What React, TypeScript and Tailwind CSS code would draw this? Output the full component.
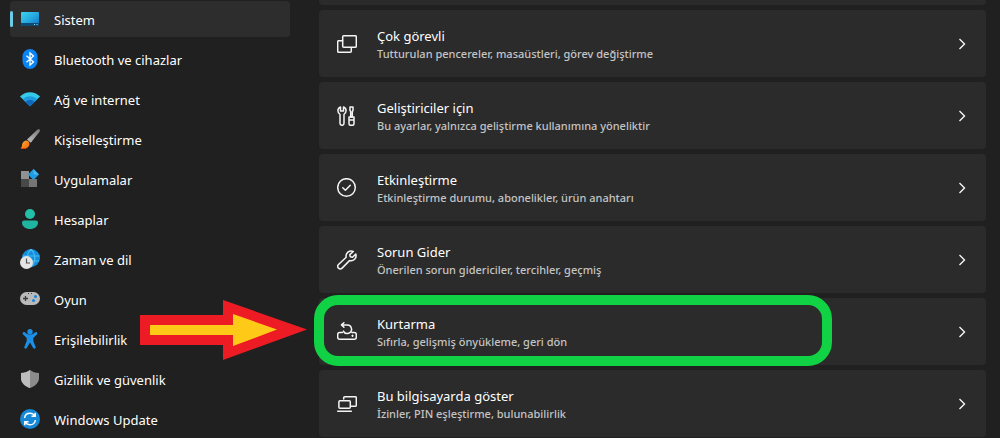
import type { ReactNode } from "react";
import { clsx } from "clsx";

type NavItem = { label: string; icon: ReactNode; active?: boolean };
type SettingItem = {
  title: string;
  description: string;
  icon: ReactNode;
  highlighted?: boolean;
};

/** Full-colour sidebar icon on a 20px grid. */
function ColorIcon({ children }: { children: ReactNode }) {
  return (
    <svg viewBox="0 0 20 20" className="size-5 shrink-0" aria-hidden="true">
      {children}
    </svg>
  );
}

/** Thin outline icon used on the cards. */
function LineIcon({ children }: { children: ReactNode }) {
  return (
    <svg
      viewBox="0 0 20 20"
      className="size-5 shrink-0"
      fill="none"
      stroke="#f5f5f5"
      strokeWidth="1.5"
      strokeLinecap="round"
      strokeLinejoin="round"
      aria-hidden="true"
    >
      {children}
    </svg>
  );
}

const navItems: NavItem[] = [
  {
    label: "Sistem",
    active: true,
    icon: (
      <ColorIcon>
        <defs>
          <linearGradient id="screen" x1="0" y1="0" x2="1" y2="1">
            <stop offset="0" stopColor="#3cd2ee" />
            <stop offset="0.5" stopColor="#27a9e0" />
            <stop offset="1" stopColor="#0f6fc4" />
          </linearGradient>
        </defs>
        <rect x="1" y="3" width="18" height="14" rx="1" fill="url(#screen)" />
        <path d="M1 14h18v2a1 1 0 0 1-1 1H2a1 1 0 0 1-1-1z" fill="#0d4a73" />
        <path d="M14 15h1v1h-1zM16.500 15h1v1h-1z" fill="#9fdcf2" />
      </ColorIcon>
    ),
  },
  {
    label: "Bluetooth ve cihazlar",
    icon: (
      <ColorIcon>
        <rect x="2.500" y="0" width="15" height="20" rx="7.500" fill="#0a84f5" />
        <path
          d="M6.500 6.700l7 6.400-3.500 3V3.900l3.500 3-7 6.400"
          fill="none"
          stroke="#fff"
          strokeWidth="1.300"
        />
      </ColorIcon>
    ),
  },
  {
    label: "Ağ ve internet",
    icon: (
      <ColorIcon>
        <path d="M0 7.500C5.500 1.800 14.500 1.800 20 7.500L10 17.300z" fill="#35c9e8" />
        <path d="M2.800 10.200c4-4 10.400-4 14.400 0L10 17.300z" fill="#1e9ade" />
        <path d="M5.500 12.900c2.500-2.400 6.500-2.400 9 0L10 17.300z" fill="#1068bd" />
      </ColorIcon>
    ),
  },
  {
    label: "Kişiselleştirme",
    icon: (
      <ColorIcon>
        <defs>
          <linearGradient id="handle" x1="1" y1="0" x2="0" y2="1">
            <stop offset="0" stopColor="#777" />
            <stop offset="1" stopColor="#c4c4c4" />
          </linearGradient>
          <linearGradient id="bristle" x1="0" y1="0" x2="1" y2="1">
            <stop offset="0" stopColor="#ffb22e" />
            <stop offset="1" stopColor="#f0620f" />
          </linearGradient>
        </defs>
        <path
          d="M19.600.5c.6.7.4 1.500-.2 2.500L10.800 13.800 7 10.600 16.500 1.500c1-1 2.400-1.600 3.100-1z"
          fill="url(#handle)"
        />
        <path
          d="M8.300 12.200c1.500 1.300 1.500 3.700.3 5.200C6.900 19.600 3.500 20.300.5 19.200c1.700-.7 1.200-2.400 1.800-4.400.8-2.700 4-4.300 6-2.600z"
          fill="url(#bristle)"
        />
        <path d="M.5 19.200c2.300-.3 4.600-.5 6.200.1-1.900.9-4.300.7-6.200-.1z" fill="#dd3e12" />
      </ColorIcon>
    ),
  },
  {
    label: "Uygulamalar",
    icon: (
      <ColorIcon>
        <rect x="1" y="2" width="8" height="8" fill="#929292" />
        <rect x="1" y="10" width="8" height="8" fill="#484848" />
        <rect x="9" y="10" width="8" height="8" fill="#757575" />
        <path d="M13.500 0L19 5.500 13.500 11 8 5.500z" fill="#1f9be4" />
        <path d="M13.500 0L19 5.500 13.500 5.500z" fill="#45b6f0" />
      </ColorIcon>
    ),
  },
  {
    label: "Hesaplar",
    icon: (
      <ColorIcon>
        <circle cx="10" cy="5" r="5" fill="#24bfa8" />
        <path
          d="M2 13.500c0-1.100.9-2 2-2h12c1.100 0 2 .9 2 2 0 4-3.500 6.500-8 6.500s-8-2.500-8-6.500z"
          fill="#1fb5a0"
        />
      </ColorIcon>
    ),
  },
  {
    label: "Zaman ve dil",
    icon: (
      <ColorIcon>
        <circle cx="11" cy="9" r="9" fill="#158ddd" />
        <path
          d="M2.500 7h17M3 12h16M11 0c-5 5-5 13 0 18M11 0c5 5 5 13 0 18"
          fill="none"
          stroke="#48bcf0"
          strokeWidth="1.200"
        />
        <circle cx="6.500" cy="13.500" r="6.500" fill="#e4e4e4" />
        <path d="M6.500 9.500V14h3.500" fill="none" stroke="#555" strokeWidth="1.200" />
      </ColorIcon>
    ),
  },
  {
    label: "Oyun",
    icon: (
      <ColorIcon>
        <rect x="0" y="3" width="20" height="13" rx="6.500" fill="#b9b9b9" />
        <path d="M5.500 7v5M3 9.500h5" stroke="#3b3b3b" strokeWidth="1.300" />
        <circle cx="15.500" cy="7.500" r="1.500" fill="#1583dc" />
        <circle cx="13.500" cy="11.500" r="1.500" fill="#1583dc" />
        <path d="M8 4.500h1M11 4.500h1" stroke="#3b3b3b" />
      </ColorIcon>
    ),
  },
  {
    label: "Erişilebilirlik",
    icon: (
      <ColorIcon>
        <circle cx="10" cy="2.700" r="2.700" fill="#1b8fe3" />
        <path
          d="M3.300 3.300c.8-.5 1.500-.1 2.100.5C7.700 6.200 12.300 6.200 14.600 3.800c.6-.6 1.300-1 2.100-.5.9.5.8 1.600.2 2.200L13.300 9v3l2.400 6c.3 1.700-1.700 2.300-2.500 1L10 13.500 6.800 19c-.8 1.300-2.800.7-2.500-1l2.400-6V9L3.100 5.500c-.6-.6-.7-1.700.2-2.200z"
          fill="#1b8fe3"
        />
      </ColorIcon>
    ),
  },
  {
    label: "Gizlilik ve güvenlik",
    icon: (
      <ColorIcon>
        <path d="M10 1c2.500 2 5.500 3 9 3v5c0 4.500-3.500 8-9 10-5.500-2-9-5.500-9-10V4c3.500 0 6.500-1 9-3z" fill="#8c8c8c" />
        <path d="M10 1v18C4.500 17 1 13.500 1 9V4c3.500 0 6.500-1 9-3z" fill="#bdbdbd" />
      </ColorIcon>
    ),
  },
  {
    label: "Windows Update",
    icon: (
      <ColorIcon>
        <circle cx="10" cy="10" r="10" fill="#1588d8" />
        <path
          d="M4.600 9C5 5.800 7.500 4.200 10 4.200c2 0 3.700 1 4.700 2.600M15.400 11c-.4 3.200-2.900 4.800-5.400 4.800-2 0-3.700-1-4.700-2.600M15.200 3.700v3.600h-3.700M4.800 16.300v-3.600h3.700"
          fill="none"
          stroke="#fff"
          strokeWidth="1.500"
        />
      </ColorIcon>
    ),
  },
];

const settings: SettingItem[] = [
  {
    title: "Çok görevli",
    description: "Tutturulan pencereler, masaüstleri, görev değiştirme",
    icon: (
      <LineIcon>
        <rect x="5.700" y="1.700" width="13.600" height="11.600" rx="1" />
        <path d="M5.500 6.700H1.700a1 1 0 0 0-1 1v9.600a1 1 0 0 0 1 1h11.600a1 1 0 0 0 1-1v-3.800" />
      </LineIcon>
    ),
  },
  {
    title: "Geliştiriciler için",
    description: "Bu ayarlar, yalnızca geliştirme kullanımına yöneliktir",
    icon: (
      <LineIcon>
        <path d="M3.500.9C1.900 1.500.9 2.900.9 4.600c0 1.700.9 3 2.100 3.700v9a2 2 0 0 0 4 0v-9c1.200-.7 2.100-2 2.100-3.700C9.100 2.900 8.100 1.500 6.500.9v4H3.500z" />
        <path d="M13 .9h3v3.500l-.7 1.300V11h-1.600V5.700L13 4.400z" />
        <path d="M12 11h5v6.800a1.500 1.500 0 0 1-1.500 1.500h-2a1.500 1.500 0 0 1-1.500-1.500zM12 14h5" />
      </LineIcon>
    ),
  },
  {
    title: "Etkinleştirme",
    description: "Etkinleştirme durumu, abonelikler, ürün anahtarı",
    icon: (
      <LineIcon>
        <circle cx="9.500" cy="9.500" r="8.800" />
        <path d="M5.800 9.800l2.600 2.500 4.900-5" />
      </LineIcon>
    ),
  },
  {
    title: "Sorun Gider",
    description: "Önerilen sorun gidericiler, tercihler, geçmiş",
    icon: (
      <LineIcon>
        <path d="M16.300 1.500A5.100 5.100 0 0 0 9.200 7.300L1.500 14.500a2.500 2.500 0 0 0 3.600 3.600l7.400-7.500a5.100 5.100 0 0 0 6.300-6.500l-3.300 3.200-2.200-.5-.5-2.200z" />
      </LineIcon>
    ),
  },
  {
    title: "Kurtarma",
    description: "Sıfırla, gelişmiş önyükleme, geri dön",
    highlighted: true,
    icon: (
      <LineIcon>
        <path d="M5.500 10.500H2.700a2 2 0 0 0-2 2v2.800a2 2 0 0 0 2 2h14.600a2 2 0 0 0 2-2v-2.800a2 2 0 0 0-2-2h-2.500" />
        <path d="M4.700 2.900h5.500a4.300 4.300 0 1 1-3.800 6.200M6.900.7L4.500 2.900l2.400 2.400" />
        <path d="M15.500 13v1.600M14.700 13.800h1.600" strokeWidth="1" />
      </LineIcon>
    ),
  },
  {
    title: "Bu bilgisayarda göster",
    description: "İzinler, PIN eşleştirme, bulunabilirlik",
    icon: (
      <LineIcon>
        <path d="M6.700 5V3.700a1 1 0 0 1 1-1h10.600a1 1 0 0 1 1 1v7.600a1 1 0 0 1-1 1h-4" />
        <rect x="1.900" y="6.700" width="11.400" height="7.600" rx="1" />
        <path d="M.7 17.200h13.600" />
      </LineIcon>
    ),
  },
];

function Sidebar() {
  return (
    <nav className="w-[290px] shrink-0 pt-px pl-[10px]">
      <ul className="flex flex-col gap-1">
        {navItems.map((item) => (
          <li key={item.label}>
            <a
              href="#"
              aria-current={item.active ? "page" : undefined}
              className={clsx(
                "flex h-9 items-center rounded text-[13px] leading-5 text-white",
                item.active && "bg-[#2d2d2d]",
              )}
            >
              <span
                className={clsx(
                  "mr-[7px] h-4 w-[3px] rounded-full",
                  item.active && "bg-[#6ccbe8]",
                )}
              />
              {item.icon}
              <span className="ml-[14px] pt-px">{item.label}</span>
            </a>
          </li>
        ))}
      </ul>
    </nav>
  );
}

/** Red and yellow arrow that points at the highlighted card. */
function Arrow() {
  return (
    <svg
      viewBox="0 0 167 60"
      className="pointer-events-none absolute top-[2px] right-full mr-3 h-[60px] w-[167px]"
      aria-hidden="true"
    >
      <path d="M0 15h83V0l84 29.500L83 60V45H0z" fill="#ed1c24" />
      <path d="M10 25h83V14l44 15.500L93 46V35H10z" fill="#ffc918" />
    </svg>
  );
}

function SettingCard({ item }: { item: SettingItem }) {
  return (
    <li className="relative">
      <button
        type="button"
        className="flex h-[67px] w-full items-center rounded bg-[#2b2b2b] pr-[19px] pl-[18px] text-left"
      >
        {item.icon}
        <span className="ml-5 flex flex-1 flex-col pt-[2px]">
          <span className="text-[13px] leading-[18px] text-white">{item.title}</span>
          <span className="text-[11px] leading-[18px] font-medium text-[#c4c4c4]">
            {item.description}
          </span>
        </span>
        <svg viewBox="0 0 10 12" className="h-3 w-[10px]" fill="none" aria-hidden="true">
          <path d="M2.500 1l5 5-5 5" stroke="#f5f5f5" strokeWidth="1.400" />
        </svg>
      </button>
      {item.highlighted && (
        <>
          <Arrow />
          <div className="pointer-events-none absolute -top-[3px] -bottom-px -left-[5px] w-[518px] rounded-3xl border-10 border-[#11d244]" />
        </>
      )}
    </li>
  );
}

export default function App() {
  return (
    <div className="flex min-h-screen overflow-hidden bg-[#202020] font-['Noto_Sans',sans-serif]">
      <Sidebar />
      <main className="min-w-0 flex-1 pr-[14px] pl-[29px]">
        <div className="h-[5px] rounded-b bg-[#2b2b2b]" />
        <ul className="mt-[5px] flex flex-col gap-[5px]">
          {settings.map((item) => (
            <SettingCard key={item.title} item={item} />
          ))}
        </ul>
      </main>
    </div>
  );
}
